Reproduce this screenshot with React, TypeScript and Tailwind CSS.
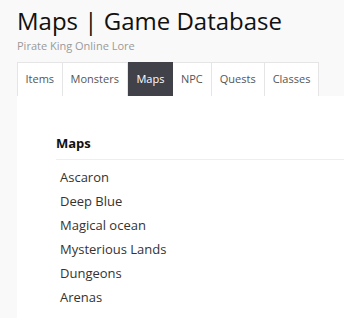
const tabs = ["Items", "Monsters", "Maps", "NPC", "Quests", "Classes"];
const maps = ["Ascaron", "Deep Blue", "Magical ocean", "Mysterious Lands", "Dungeons", "Arenas"];

export default function App() {
  return (
    <div className="h-[318px] overflow-hidden bg-[#f9f9f9] pl-[17px] font-['Open_Sans',sans-serif]">
      <h1 className="pt-[5px] text-[24px] leading-[32px] text-[#111]">Maps | Game Database</h1>
      <p className="mt-[1px] text-[11px] leading-[16px] text-[#999]">Pirate King Online Lore</p>
      <div className="mt-[8px] flex">
        {tabs.map((tab, i) => (
          <div
            key={tab}
            className={
              tab === "Maps"
                ? "flex h-[34px] items-center bg-[#404149] px-[8.5px] text-[11px] text-white"
                : "flex h-[34px] items-center border-t border-r border-[#e5e5e5] bg-white px-[8px] text-[11px] text-[#555] " +
                  (i === 0 ? "border-l pr-[7.5px] pl-[7.5px]" : "")
            }
          >
            {tab}
          </div>
        ))}
      </div>
      <div className="h-full bg-white pt-[38px] pl-[39px]">
        <h2 className="border-b border-[#eee] pb-[7px] text-[13px] font-bold leading-[18px] text-[#111]">Maps</h2>
        <ul className="pt-[5px] pl-[4px]">
          {maps.map((m) => (
            <li key={m} className="text-[13px] leading-[24px] text-[#333]">
              {m}
            </li>
          ))}
        </ul>
      </div>
    </div>
  );
}
